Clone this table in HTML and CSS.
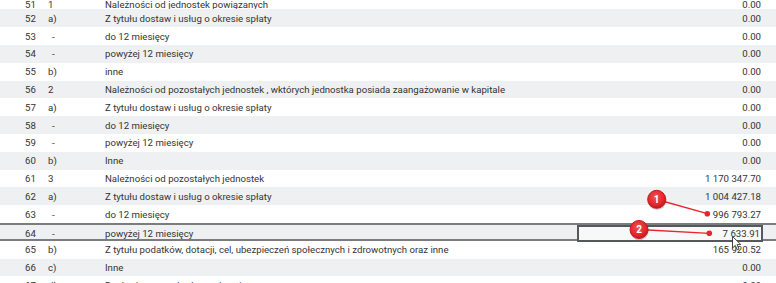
FILE: index.html
```html
<!DOCTYPE html>
<html lang="pl">
<head>
<meta charset="utf-8">
<title>Należności</title>
<link rel="stylesheet" href="styles.css">
</head>
<body>
<div class="page">
  <div class="table">
    <div class="row first"><span class="num">51</span><span class="sub">1</span><span class="name">Należności od jednostek powiązanych</span><span class="val">0.00</span></div>
    <div class="row"><span class="num">52</span><span class="sub">a)</span><span class="name">Z tytułu dostaw i usług o okresie spłaty</span><span class="val">0.00</span></div>
    <div class="row"><span class="num">53</span><span class="sub dash">-</span><span class="name">do 12 miesięcy</span><span class="val">0.00</span></div>
    <div class="row"><span class="num">54</span><span class="sub dash">-</span><span class="name">powyżej 12 miesięcy</span><span class="val">0.00</span></div>
    <div class="row"><span class="num">55</span><span class="sub">b)</span><span class="name">inne</span><span class="val">0.00</span></div>
    <div class="row"><span class="num">56</span><span class="sub">2</span><span class="name">Należności od pozostałych jednostek , wktórych jednostka posiada zaangażowanie w kapitale</span><span class="val">0.00</span></div>
    <div class="row"><span class="num">57</span><span class="sub">a)</span><span class="name">Z tytułu dostaw i usług o okresie spłaty</span><span class="val">0.00</span></div>
    <div class="row"><span class="num">58</span><span class="sub dash">-</span><span class="name">do 12 miesięcy</span><span class="val">0.00</span></div>
    <div class="row"><span class="num">59</span><span class="sub dash">-</span><span class="name">powyżej 12 miesięcy</span><span class="val">0.00</span></div>
    <div class="row"><span class="num">60</span><span class="sub">b)</span><span class="name">Inne</span><span class="val">0.00</span></div>
    <div class="row"><span class="num">61</span><span class="sub">3</span><span class="name">Należności od pozostałych jednostek</span><span class="val">1 170 347.70</span></div>
    <div class="row"><span class="num">62</span><span class="sub">a)</span><span class="name">Z tytułu dostaw i usług o okresie spłaty</span><span class="val">1 004 427.18</span></div>
    <div class="row"><span class="num">63</span><span class="sub dash">-</span><span class="name">do 12 miesięcy</span><span class="val">996 793.27</span></div>
    <div class="row selected"><span class="num">64</span><span class="sub dash">-</span><span class="name">powyżej 12 miesięcy</span><span class="val active">7 633.91</span></div>
    <div class="row"><span class="num">65</span><span class="sub">b)</span><span class="name">Z tytułu podatków, dotacji, cel, ubezpieczeń społecznych i zdrowotnych oraz inne</span><span class="val">165 920.52</span></div>
    <div class="row"><span class="num">66</span><span class="sub">c)</span><span class="name">Inne</span><span class="val">0.00</span></div>
    <div class="row"><span class="num">67</span><span class="sub">d)</span><span class="name">Dochodzone na drodze sądowej</span><span class="val">0.00</span></div>
  </div>

  <svg class="marks" width="776" height="283" viewBox="0 0 776 283" aria-hidden="true">
    <defs>
      <radialGradient id="bub" cx="45%" cy="38%" r="65%">
        <stop offset="0" stop-color="#f25252"/>
        <stop offset="0.7" stop-color="#e0262b"/>
        <stop offset="1" stop-color="#b8141a"/>
      </radialGradient>
    </defs>
    <line x1="657" y1="199.5" x2="707.3" y2="213.7" stroke="#e8262c" stroke-width="1.3"/>
    <circle cx="707.3" cy="213.7" r="2.8" fill="#e8262c"/>
    <line x1="639" y1="229.5" x2="709.3" y2="233.3" stroke="#e8262c" stroke-width="1.3"/>
    <circle cx="709.3" cy="233.3" r="2.8" fill="#e8262c"/>
    <circle cx="657" cy="200.5" r="9.5" fill="rgba(0,0,0,0.18)"/>
    <circle cx="656.7" cy="199.3" r="9" fill="url(#bub)" stroke="#c41a20" stroke-width="1"/>
    <text x="656.7" y="202.8" class="bubtxt">1</text>
    <circle cx="639.3" cy="230.7" r="9.5" fill="rgba(0,0,0,0.18)"/>
    <circle cx="639" cy="229.5" r="9" fill="url(#bub)" stroke="#c41a20" stroke-width="1"/>
    <text x="639" y="233" class="bubtxt">2</text>
    <path d="M732.5 236.5 L732.5 248 L735.3 245.4 L737.3 249.8 L739 249 L737.1 244.7 L740.8 244.5 Z" fill="#fff" stroke="#333" stroke-width="0.9" stroke-linejoin="round"/>
  </svg>
</div>
</body>
</html>
```
FILE: styles.css
```css
html, body {
  margin: 0;
  padding: 0;
  background: #ffffff;
}

.page {
  position: relative;
  width: 776px;
  height: 283px;
  overflow: hidden;
  font-family: Roboto, "Liberation Sans", sans-serif;
  font-size: 9.65px;
  color: #343434;
}

.table {
  display: flex;
  flex-direction: column;
  margin-top: -8.4px;
}

.row {
  display: grid;
  grid-template-columns: 23px 57px 1fr 186px;
  align-items: center;
  height: 17.8px;
  padding: 0 13px 0 25px;
  box-sizing: border-box;
  white-space: nowrap;
}

.row:nth-child(even) {
  background: #eef0f1;
}

.row.first {
  padding-top: 7px;
}

.sub.dash {
  padding-left: 4px;
}

.name {
  overflow: hidden;
}

.val {
  text-align: right;
  padding-right: 2px;
}

.row.selected {
  border-top: 2px solid #7a7c7e;
  border-bottom: 2px solid #7a7c7e;
}

.val.active {
  box-sizing: border-box;
  height: 17px;
  line-height: 13px;
  border: 2px solid #56595c;
  background: #f7f8f8;
  padding-right: 1px;
}

.marks {
  position: absolute;
  left: 0;
  top: 0;
}

.bubtxt {
  font-family: Roboto, "Liberation Sans", sans-serif;
  font-size: 10px;
  font-weight: 700;
  fill: #ffffff;
  text-anchor: middle;
}
```
